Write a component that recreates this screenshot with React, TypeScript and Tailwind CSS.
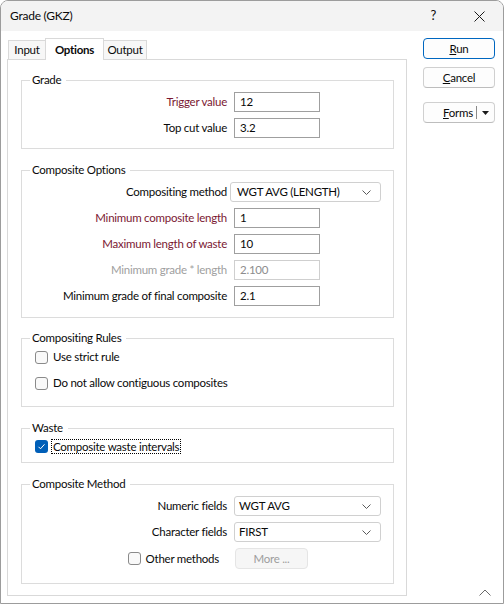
import React from "react";

const RED = "text-[#7b1832]";

function Check({ checked = false }: { checked?: boolean }) {
  if (checked) {
    return (
      <span className="flex h-[13px] w-[13px] shrink-0 items-center justify-center rounded-[3px] bg-[#005fb8]">
        <svg width="9" height="9" viewBox="0 0 9 9">
          <polyline points="1.5,4.8 3.5,6.8 7.5,2.3" fill="none" stroke="white" strokeWidth="1" />
        </svg>
      </span>
    );
  }
  return <span className="h-[13px] w-[13px] shrink-0 rounded-[3px] border border-[#8a8a8a] bg-[#f9f9f9]" />;
}

function Chevron() {
  return (
    <svg width="9" height="5" viewBox="0 0 9 5" className="ml-auto">
      <polyline points="0.5,0.5 4.5,4.5 8.5,0.5" fill="none" stroke="#5a5a5a" strokeWidth="1" />
    </svg>
  );
}

function Group({ title, className, children }: { title: string; className: string; children: React.ReactNode }) {
  return (
    <fieldset className={"border border-[#dcdcdc] " + className}>
      <legend className="ml-[8px] pl-[2px] pr-[5px] leading-[16px] text-[#0a0a0a]">{title}</legend>
      {children}
    </fieldset>
  );
}

function Field({ label, value, tone = "" }: { label: string; value: string; tone?: string }) {
  const disabled = tone === "off";
  return (
    <div className="flex h-[20px] items-center">
      <span
        className={
          "w-[205px] text-right " + (tone === "red" ? RED : disabled ? "text-[#a0a0a0]" : "text-[#0a0a0a]")
        }
      >
        {label}
      </span>
      <div
        className={
          "ml-[7px] flex h-[20px] w-[86px] items-center border bg-white pl-[5px] " +
          (disabled ? "border-[#cfcfcf] text-[#8d8d8d]" : "border-[#9f9f9f] text-[#0a0a0a]")
        }
      >
        {value}
      </div>
    </div>
  );
}

function Combo({ label, value, wide = false }: { label: string; value: string; wide?: boolean }) {
  return (
    <div className="flex h-[20px] items-center">
      <span className="w-[205px] text-right text-[#0a0a0a]">{label}</span>
      <div
        className={
          "flex h-[20px] items-center rounded-[3px] border border-[#d0d0d0] bg-white pr-[9px] text-[#0a0a0a] " +
          (wide ? "ml-[3px] w-[151px] pl-[6px]" : "ml-[7px] w-[147px] pl-[4px]")
        }
      >
        <span>{value}</span>
        <Chevron />
      </div>
    </div>
  );
}

function Button({ children, primary = false }: { children: React.ReactNode; primary?: boolean }) {
  return (
    <div
      className={
        "flex h-[21px] w-[72px] items-center justify-center rounded-[4px] border bg-[#fdfdfd] text-[#0a0a0a] " +
        (primary ? "border-[#0067c0]" : "border-[#d0d0d0] border-b-[#bdbdbd]")
      }
    >
      {children}
    </div>
  );
}

export default function App() {
  return (
    <div className="flex h-[604px] w-[504px] flex-col overflow-hidden rounded-t-[8px] border border-[#9c9c9c] bg-white font-['Lato',sans-serif] text-[11.5px] tracking-[-0.25px] text-[#0a0a0a]">
      {/* Title bar */}
      <div className="flex h-[30px] shrink-0 items-center bg-[#f3f3f3] pl-[9px] text-[12px]">
        <span>Grade (GKZ)</span>
        <span className="ml-auto text-[13px]">?</span>
        <svg width="11" height="11" viewBox="0 0 11 11" className="ml-[38px] mr-[18px]">
          <line x1="0.5" y1="0.5" x2="10.5" y2="10.5" stroke="#1a1a1a" strokeWidth="1" />
          <line x1="10.5" y1="0.5" x2="0.5" y2="10.5" stroke="#1a1a1a" strokeWidth="1" />
        </svg>
      </div>

      <div className="flex flex-1 pt-[7px]">
        {/* Tabs + panel */}
        <div className="ml-[6px] flex w-[400px] flex-col">
          <div className="flex h-[21px] items-end pl-px">
            <div className="flex h-[19px] w-[38px] items-center justify-center border border-b-0 border-[#d9d9d9] bg-[#f7f7f7]">
              Input
            </div>
            <div className="relative z-10 -mb-px -ml-px flex h-[22px] w-[59px] items-start justify-center border border-b-0 border-[#d9d9d9] bg-white pt-[2px] font-bold">
              Options
            </div>
            <div className="-ml-px flex h-[19px] w-[44px] items-center justify-center border border-b-0 border-[#d9d9d9] bg-[#f7f7f7]">
              Output
            </div>
          </div>

          <div className="flex h-[537px] flex-col border border-[#d9d9d9] pl-[13px] pr-[12px]">
            <Group title="Grade" className="mt-[12px] pb-[10px]">
              <div className="flex flex-col gap-[6px] pt-[4px]">
                <Field label="Trigger value" value="12" tone="red" />
                <Field label="Top cut value" value="3.2" />
              </div>
            </Group>

            <Group title="Composite Options" className="mt-[13px] pb-[11px]">
              <div className="flex flex-col gap-[6px] pt-[4px]">
                <Combo label="Compositing method" value="WGT AVG (LENGTH)" wide />
                <Field label="Minimum composite length" value="1" tone="red" />
                <Field label="Maximum length of waste" value="10" tone="red" />
                <Field label="Minimum grade * length" value="2.100" tone="off" />
                <Field label="Minimum grade of final composite" value="2.1" />
              </div>
            </Group>

            <Group title="Compositing Rules" className="mt-[12px] pb-[13px]">
              <div className="flex flex-col gap-[6px] pl-[13px] pt-px">
                <div className="flex h-[20px] items-center gap-[5px]">
                  <Check />
                  <span>Use strict rule</span>
                </div>
                <div className="flex h-[20px] items-center gap-[5px]">
                  <Check />
                  <span>Do not allow contiguous composites</span>
                </div>
              </div>
            </Group>

            <Group title="Waste" className="mt-[13px] pb-[6px]">
              <div className="flex h-[20px] items-center pl-[13px] pt-px">
                <Check checked />
                <span className="ml-[3px] border border-dotted border-black pl-px pr-px leading-[13px]">
                  Composite waste intervals
                </span>
              </div>
            </Group>

            <Group title="Composite Method" className="mt-[13px] pb-[14px]">
              <div className="flex flex-col gap-[6px] pt-[4px]">
                <Combo label="Numeric fields" value="WGT AVG" />
                <Combo label="Character fields" value="FIRST" />
                <div className="flex h-[21px] items-center">
                  <div className="flex w-[205px] items-center justify-end gap-[5px] pr-[8px]">
                    <Check />
                    <span>Other methods</span>
                  </div>
                  <div className="ml-[8px] flex h-[21px] w-[73px] items-center justify-center rounded-[4px] border border-[#e5e5e5] bg-[#f6f6f6] text-[#9d9d9d]">
                    More ...
                  </div>
                </div>
              </div>
            </Group>
          </div>
        </div>

        {/* Right column buttons */}
        <div className="ml-[16px] flex w-[72px] flex-col">
          <Button primary>
            <span>
              <span className="underline">R</span>un
            </span>
          </Button>
          <div className="mt-[8px]">
            <Button>
              <span>
                <span className="underline">C</span>ancel
              </span>
            </Button>
          </div>
          <div className="mt-[14px] flex h-[21px] w-[72px] items-center rounded-[4px] border border-[#d0d0d0] border-b-[#bdbdbd] bg-[#fdfdfd]">
            <span className="ml-[19px]">
              <span className="underline">F</span>orms
            </span>
            <span className="ml-auto h-[13px] w-px bg-[#8a8a8a]" />
            <svg width="7" height="4" viewBox="0 0 7 4" className="ml-[5px] mr-[5px]">
              <polygon points="0,0 7,0 3.5,4" fill="#1a1a1a" />
            </svg>
          </div>
          <svg width="12" height="7" viewBox="0 0 12 7" className="mt-auto mb-[7px] ml-auto mr-[4px]">
            <polyline points="0.5,6.5 6,1 11.5,6.5" fill="none" stroke="#6a6a6a" strokeWidth="1" />
          </svg>
        </div>
      </div>
    </div>
  );
}
